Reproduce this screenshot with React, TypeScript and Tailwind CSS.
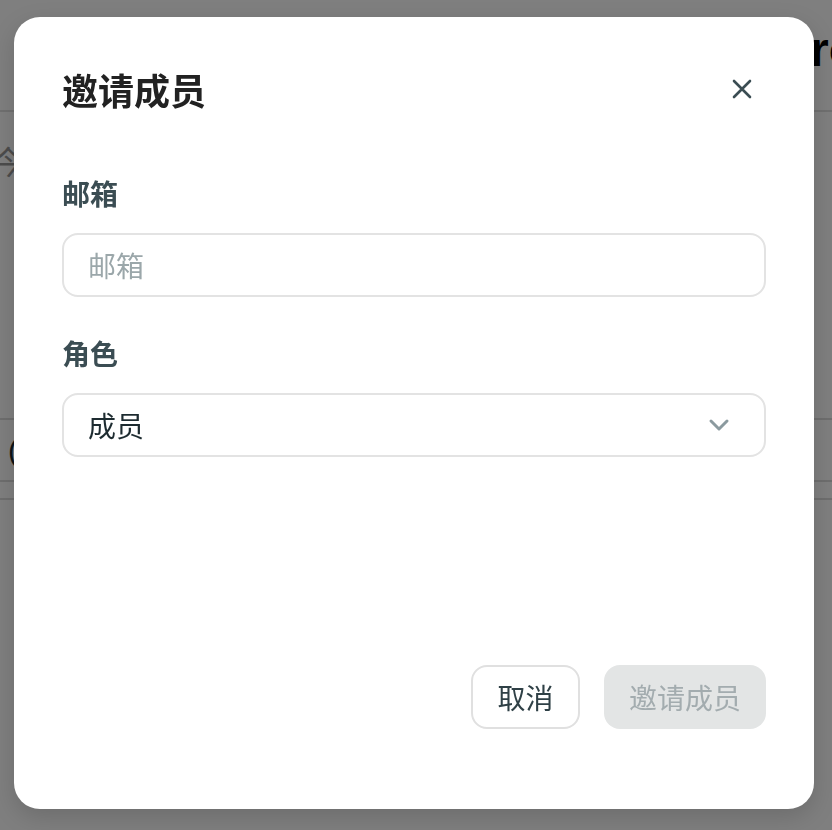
import React from "react";

const font = { fontFamily: '"Noto Sans CJK SC", "Noto Sans", sans-serif' };

export default function App() {
  return (
    <div className="relative w-[832px] h-[830px] overflow-hidden bg-white" style={font}>
      {/* background page */}
      <div className="flex flex-col">
        <div className="h-[112px] border-b-2 border-[#e0e0e0] flex items-start pt-[22px] pl-[810px] whitespace-nowrap">
          <span className="text-[48px] font-bold text-black leading-[56px]" style={{ fontFamily: '"Liberation Sans", sans-serif' }}>
            rofile
          </span>
        </div>
        <div className="h-[96px] flex items-center -ml-[8px] whitespace-nowrap">
          <span className="text-[32px] text-[#999]">今天</span>
        </div>
        <div className="h-[210px]" />
        <div className="h-[62px] border-t-2 border-[#dcdcdc] flex items-center pl-[8px]">
          <span className="text-[30px] text-[#1a2a2e]" style={{ fontFamily: '"Liberation Sans", sans-serif' }}>(</span>
        </div>
        <div className="h-[18px] border-t-2 border-[#dcdcdc]" />
        <div className="border-t-2 border-[#dcdcdc]" />
      </div>

      {/* overlay */}
      <div className="fixed inset-0 bg-black/50" />

      {/* dialog */}
      <div className="absolute left-[14px] top-[17px] w-[800px] h-[792px] bg-white rounded-[26px] shadow-[0_8px_24px_rgba(0,0,0,0.15)] flex flex-col px-[48px] pt-[48px] pb-[80px]">
        <div className="h-[48px] flex items-center justify-between">
          <h2 className="text-[36px] leading-[48px] font-semibold text-[#222]">邀请成员</h2>
          <button className="w-[40px] h-[40px] flex items-center justify-center text-[#3b4d53] mr-[4px]">
            <svg width="20" height="20" viewBox="0 0 20 20" fill="none" stroke="currentColor" strokeWidth="2.6" strokeLinecap="round">
              <path d="M2 2 L18 18 M18 2 L2 18" />
            </svg>
          </button>
        </div>

        <label className="mt-[60px] text-[28px] leading-[40px] font-semibold text-[#3b4d53]">邮箱</label>
        <div className="mt-[20px] h-[64px] rounded-[16px] border-2 border-[#e3e3e3] flex items-center px-[24px]">
          <span className="text-[28px] text-[#9ba7aa]">邮箱</span>
        </div>

        <label className="mt-[36px] text-[28px] leading-[40px] font-semibold text-[#3b4d53]">角色</label>
        <div className="mt-[20px] h-[64px] rounded-[16px] border-2 border-[#e3e3e3] flex items-center justify-between pl-[24px] pr-[34px]">
          <span className="text-[28px] text-[#1d2b30]">成员</span>
          <svg width="22" height="14" viewBox="0 0 22 14" fill="none" stroke="#8b9a9f" strokeWidth="3" strokeLinecap="round" strokeLinejoin="round">
            <path d="M3 3 L11 11 L19 3" />
          </svg>
        </div>

        <div className="mt-auto flex justify-end gap-[24px]">
          <button className="h-[64px] w-[109px] rounded-[16px] border-2 border-[#e0e0e0] text-[28px] text-[#2f4046] flex items-center justify-center">
            取消
          </button>
          <button className="h-[64px] w-[162px] rounded-[16px] bg-[#e3e5e5] text-[28px] text-[#a3acaf] flex items-center justify-center">
            邀请成员
          </button>
        </div>
      </div>
    </div>
  );
}
